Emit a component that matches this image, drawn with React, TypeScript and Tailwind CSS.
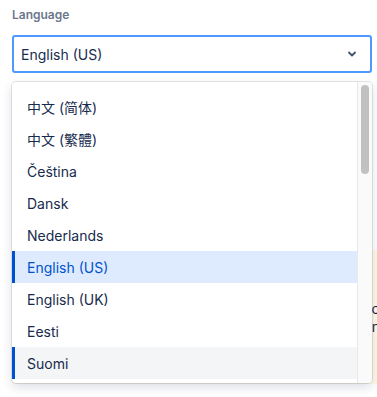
import React from "react";

const items = [
  "中文 (简体)",
  "中文 (繁體)",
  "Čeština",
  "Dansk",
  "Nederlands",
  "English (US)",
  "English (UK)",
  "Eesti",
  "Suomi",
];

export default function App() {
  return (
    <div
      className="relative w-[377px] h-[397px] bg-white overflow-hidden"
      style={{ fontFamily: 'Inter, "Noto Sans CJK SC", sans-serif' }}
    >
      <div className="pl-3 pt-[6px]">
        <div className="text-[12px] font-semibold text-[#6b778c] leading-[18px]">Language</div>
        <div className="mt-[11px] w-[360px] h-[38px] rounded-[3px] border-2 border-[#4c9aff] bg-white flex items-center pl-[7px] pr-[13px]">
          <span className="flex-1 text-[14px] text-[#172b4d]">English (US)</span>
          <svg width="10" height="8" viewBox="0 0 10 8" className="text-[#42526e]">
            <path d="M2 2.5 L5 5.5 L8 2.5" fill="none" stroke="currentColor" strokeWidth="1.8" strokeLinecap="round" strokeLinejoin="round" />
          </svg>
        </div>
        <div className="mt-[177px] w-[420px] h-[134px] overflow-hidden rounded-[3px] bg-[#fffae6] pl-[318px] pr-2 pt-[50px] text-[14px] leading-[18px] text-[#172b4d]">
          <p className="w-[50px] text-right">to</p>
          <p className="w-[50px] text-right">in</p>
        </div>
      </div>

      <div className="absolute left-3 top-[82px] w-[360px] h-[301px] rounded-[4px] bg-white overflow-hidden shadow-[0_4px_11px_rgba(9,30,66,0.15),0_0_0_1px_rgba(9,30,66,0.1)] flex">
        <div className="flex-1 pt-[9px] overflow-hidden">
          {items.map((it) => {
            const selected = it === "English (US)";
            const hovered = it === "Suomi";
            return (
              <div
                key={it}
                className={
                  "h-8 flex items-center pl-3 text-[14px] border-l-[3px] " +
                  (selected
                    ? "bg-[#deebff] text-[#0052cc] border-[#0052cc]"
                    : hovered
                    ? "bg-[#f4f5f7] text-[#172b4d] border-[#0052cc]"
                    : "bg-white text-[#172b4d] border-transparent")
                }
              >
                {it}
              </div>
            );
          })}
        </div>
        <div className="w-[15px] h-full bg-[#fafafa] border-l border-[#e8e8e8] pt-[3px] flex justify-center">
          <div className="w-[8px] h-[89px] rounded-full bg-[#c1c1c1]" />
        </div>
      </div>
    </div>
  );
}
